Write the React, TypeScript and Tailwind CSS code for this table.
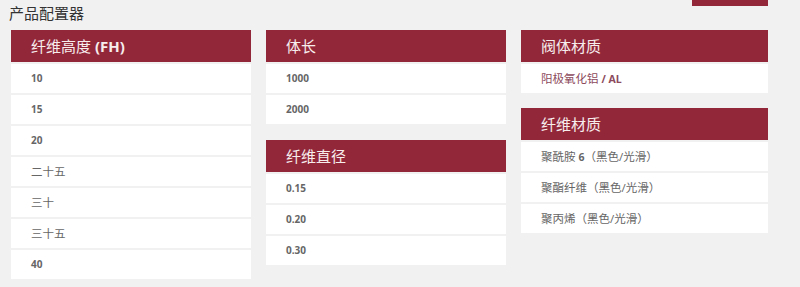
const FONT = "font-['Open_Sans','Noto_Sans_CJK_SC',sans-serif]";

interface Item {
  key: string;
  label: React.ReactNode;
  bold?: boolean;
  accent?: boolean;
}

function Card({ title, items }: { title: React.ReactNode; items: Item[] }) {
  return (
    <div className="flex flex-col gap-[2px]">
      <div className="h-8 flex items-center pl-5 bg-[#93273a] text-[15px] text-[#f7eded]">
        {title}
      </div>
      {items.map((it) => (
        <div
          key={it.key}
          className={
            "h-[29px] flex items-center pl-5 bg-white " +
            (it.bold ? "font-bold text-[10px] " : "text-[11.5px] ") +
            (it.accent ? "text-[#8c4a5c]" : "text-[#666]")
          }
        >
          {it.label}
        </div>
      ))}
    </div>
  );
}

const nums = (xs: string[]): Item[] =>
  xs.map((label) => ({ key: label, label, bold: /^[\d.]+$/.test(label) }));

export default function App() {
  return (
    <div className={`w-[800px] h-[287px] bg-[#f1f1f1] overflow-hidden ${FONT}`}>
      <div className="flex justify-between pl-[9px] pr-8 h-[30px]">
        <h1 className="text-[15px] leading-5 pt-[3px] text-[#333]">产品配置器</h1>
        <div className="w-[76px] h-[6px] bg-[#93273a]" />
      </div>

      <div className="flex gap-[15px] pl-[11px]">
        <div className="w-[240px]">
          <Card
            title={
              <span>
                纤维高度 <span className="font-bold">(FH)</span>
              </span>
            }
            items={nums(["10", "15", "20", "二十五", "三十", "三十五", "40"])}
          />
        </div>

        <div className="w-[240px] flex flex-col gap-4">
          <Card title="体长" items={nums(["1000", "2000"])} />
          <Card title="纤维直径" items={nums(["0.15", "0.20", "0.30"])} />
        </div>

        <div className="w-[247px] flex flex-col gap-[15px]">
          <Card
            title="阀体材质"
            items={[
              {
                key: "al",
                accent: true,
                label: (
                  <span>
                    阳极氧化铝 <span className="font-bold text-[10.5px]">/ AL</span>
                  </span>
                ),
              },
            ]}
          />
          <Card
            title="纤维材质"
            items={[
              {
                key: "pa6",
                label: (
                  <span>
                    聚酰胺 <span className="font-bold text-[10.5px]">6</span>（黑色/光滑）
                  </span>
                ),
              },
              { key: "pet", label: "聚酯纤维（黑色/光滑）" },
              { key: "pp", label: "聚丙烯（黑色/光滑）" },
            ]}
          />
        </div>
      </div>
    </div>
  );
}
